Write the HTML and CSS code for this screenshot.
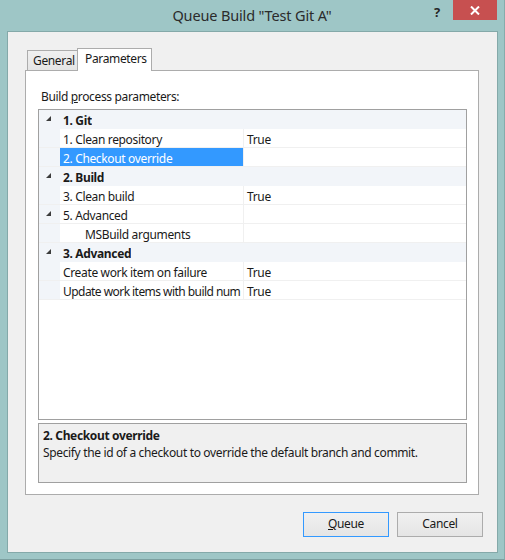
FILE: index.html
```html
<!DOCTYPE html>
<html>
<head>
<meta charset="utf-8">
<link rel="stylesheet" href="styles.css">
</head>
<body>
<div class="window">
  <div class="titlebar">
    <div class="title">Queue Build "Test Git A"</div>
    <div class="controls">
      <div class="help">?</div>
      <div class="close">
        <svg width="10" height="9" viewBox="0 0 10 9"><path d="M1 0.5 L9 8.5 M9 0.5 L1 8.5" stroke="#fff" stroke-width="2"/></svg>
      </div>
    </div>
  </div>
  <div class="client">
    <div class="tabs">
      <div class="tab general">General</div>
      <div class="tab active">Parameters</div>
    </div>
    <div class="panel">
      <div class="label">Build <u>p</u>rocess parameters:</div>
      <div class="grid">
        <div class="row cat"><span class="gut"><svg class="tri" width="5" height="5" viewBox="0 0 5 5"><polygon points="5,0 5,5 0,5"/></svg></span><span class="name">1. Git</span></div>
        <div class="row"><span class="gut"></span><span class="name">1. Clean repository</span><span class="val">True</span></div>
        <div class="row sel"><span class="gut"></span><span class="name">2. Checkout override</span><span class="val"></span></div>
        <div class="row cat"><span class="gut"><svg class="tri" width="5" height="5" viewBox="0 0 5 5"><polygon points="5,0 5,5 0,5"/></svg></span><span class="name">2. Build</span></div>
        <div class="row"><span class="gut"></span><span class="name">3. Clean build</span><span class="val">True</span></div>
        <div class="row"><span class="gut"><svg class="tri" width="5" height="5" viewBox="0 0 5 5"><polygon points="5,0 5,5 0,5"/></svg></span><span class="name">5. Advanced</span><span class="val"></span></div>
        <div class="row"><span class="gut"></span><span class="name sub">MSBuild arguments</span><span class="val"></span></div>
        <div class="row cat"><span class="gut"><svg class="tri" width="5" height="5" viewBox="0 0 5 5"><polygon points="5,0 5,5 0,5"/></svg></span><span class="name">3. Advanced</span></div>
        <div class="row"><span class="gut"></span><span class="name">Create work item on failure</span><span class="val">True</span></div>
        <div class="row"><span class="gut"></span><span class="name tight">Update work items with build num</span><span class="val">True</span></div>
      </div>
      <div class="desc">
        <div class="desc-title">2. Checkout override</div>
        <div class="desc-text">Specify the id of a checkout to override the default branch and commit.</div>
      </div>
    </div>
    <div class="buttons">
      <div class="btn default"><u>Q</u>ueue</div>
      <div class="btn">Cancel</div>
    </div>
  </div>
</div>
</body>
</html>
```

FILE: styles.css
```css
html, body {
  margin: 0;
  padding: 0;
}
body {
  width: 505px;
  height: 560px;
  overflow: hidden;
  font-family: "Noto Sans", "Open Sans", sans-serif;
  font-size: 12px;
  letter-spacing: -0.35px;
  color: #1a1a1a;
}
.window {
  width: 505px;
  height: 560px;
  box-sizing: border-box;
  background: #9ec6c6;
  border-right: 1px solid #86acac;
  border-bottom: 1px solid #7c9f9f;
  display: flex;
  flex-direction: column;
}
.titlebar {
  height: 31px;
  display: grid;
  grid-template-columns: 1fr;
  grid-template-rows: 31px;
}
.title {
  grid-area: 1 / 1;
  text-align: center;
  font-size: 14.5px;
  letter-spacing: -0.15px;
  line-height: 20px;
  padding-top: 5px;
  color: #2b2b2b;
}
.controls {
  grid-area: 1 / 1;
  justify-self: end;
  align-self: start;
  display: flex;
  align-items: flex-start;
  margin-right: 7px;
}
.help {
  width: 14px;
  font-weight: bold;
  font-size: 13px;
  letter-spacing: 0;
  line-height: 16px;
  padding-top: 4px;
  color: #262626;
  margin-right: 9px;
  text-align: center;
}
.close {
  width: 44px;
  height: 20px;
  background: #c75050;
  display: flex;
  align-items: center;
  justify-content: center;
}
.client {
  width: 491px;
  height: 522px;
  margin-left: 7px;
  box-sizing: border-box;
  border: 1px solid #84a9a9;
  background: #f0f0f0;
  padding: 16px 0 0 17px;
  display: flex;
  flex-direction: column;
}
.tabs {
  display: flex;
  align-items: flex-end;
  height: 22px;
  padding-left: 2px;
}
.tab {
  height: 20px;
  box-sizing: border-box;
  border: 1px solid #acacac;
  border-bottom: none;
  background: linear-gradient(#f0f0f0, #e5e5e5);
  line-height: 20px;
  color: #1a1a1a;
  white-space: nowrap;
}
.tab.general {
  width: 51px;
  padding-left: 5px;
}
.tab.active {
  width: 75px;
  height: 23px;
  background: #fff;
  margin-left: -1px;
  margin-bottom: -1px;
  position: relative;
  z-index: 1;
  padding-left: 7px;
  line-height: 19px;
}
.panel {
  width: 454px;
  height: 425px;
  box-sizing: border-box;
  border: 1px solid #acacac;
  background: #fff;
  padding: 16px 11px 11px 12px;
  display: flex;
  flex-direction: column;
}
.label {
  line-height: 18px;
  height: 16px;
  padding-top: 1px;
  margin-bottom: 5px;
  padding-left: 3px;
}
.grid {
  height: 311px;
  box-sizing: border-box;
  border: 1px solid #a0a0a0;
  background: #fff;
  flex-shrink: 0;
}
.row {
  display: flex;
  height: 19px;
  box-sizing: border-box;
  border-bottom: 1px solid #f0f0f0;
  line-height: 14px;
}
.row.cat {
  background: #f2f5f9;
  border-bottom: none;
  font-weight: bold;
  line-height: 17px;
}
.gut {
  width: 21px;
  flex-shrink: 0;
  background: #f2f5f9;
  position: relative;
}
.tri {
  position: absolute;
  left: 7px;
  top: 6px;
  fill: #3c3c3c;
}
.name {
  width: 184px;
  flex-shrink: 0;
  padding: 4px 0 0 3px;
  box-sizing: border-box;
  white-space: nowrap;
  overflow: hidden;
  border-right: 1px solid #f0f0f0;
}
.name.tight {
  letter-spacing: -0.55px;
}
.cat .name {
  border-right: none;
  width: auto;
  padding-top: 2px;
}
.name.sub {
  padding-left: 25px;
}
.val {
  flex: 1;
  padding: 4px 0 0 3px;
}
.sel .name {
  background: #3399ff;
  color: #fff;
}
.desc {
  margin-top: 3px;
  height: 60px;
  box-sizing: border-box;
  border: 1px solid #a0a0a0;
  background: #f0f0f0;
  padding: 4px 4px 0 4px;
  flex-shrink: 0;
}
.desc-title {
  font-weight: bold;
  line-height: 16px;
}
.desc-text {
  line-height: 16px;
  padding-top: 1px;
}
.buttons {
  display: flex;
  justify-content: flex-end;
  gap: 8px;
  margin-top: 17px;
  padding-right: 14px;
}
.btn {
  width: 86px;
  height: 25px;
  box-sizing: border-box;
  border: 1px solid #acacac;
  background: linear-gradient(#f0f0f0, #e5e5e5);
  text-align: center;
  line-height: 22px;
}
.btn.default {
  border-color: #3399ff;
}
```
